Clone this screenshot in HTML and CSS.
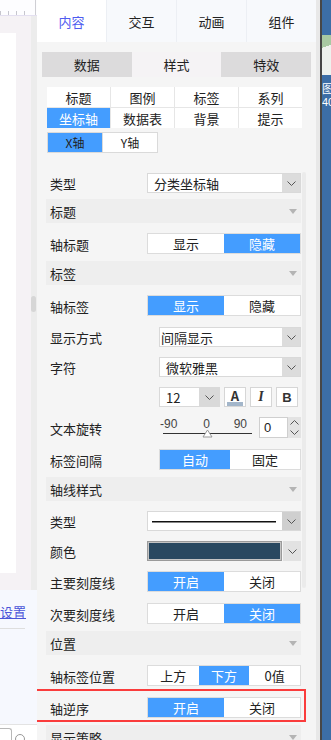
FILE: index.html
```html
<!DOCTYPE html>
<html lang="zh-CN">
<head>
  <meta charset="UTF-8">
  <meta name="viewport" content="width=device-width, initial-scale=1.0">
  <title>坐标轴样式</title>
  <link rel="stylesheet" href="styles.css">
</head>
<body>
  <div class="app">
    <div class="canvas">
      <div class="ruler">
        <span class="tick"></span><span class="tick"></span><span class="tick"></span><span class="tick"></span>
        <span class="ruler-end"></span>
      </div>
      <div class="board">
        <div class="stage"><div class="sheet"></div></div>
        <div class="gutter"><div class="gutter-thumb"></div></div>
      </div>
      <div class="props">
        <a class="link">设置</a>
        <div class="rule"></div>
        <div class="foot">
          <span class="foot-box"></span>
          <span class="foot-circle"></span>
        </div>
      </div>
    </div>

    <div class="panel">
      <div class="tabs">
        <div class="tab on">内容</div>
        <div class="tab">交互</div>
        <div class="tab">动画</div>
        <div class="tab">组件</div>
      </div>

      <div class="subtabs">
        <div class="subtab">数据</div>
        <div class="subtab on">样式</div>
        <div class="subtab">特效</div>
      </div>

      <div class="cats">
        <div class="cat">标题</div>
        <div class="cat">图例</div>
        <div class="cat">标签</div>
        <div class="cat">系列</div>
        <div class="cat on">坐标轴</div>
        <div class="cat">数据表</div>
        <div class="cat">背景</div>
        <div class="cat">提示</div>
      </div>

      <div class="axes">
        <div class="axis on">X轴</div>
        <div class="axis">Y轴</div>
      </div>

      <div class="scroll">
        <div class="form">
          <div class="row">
            <div class="label">类型</div>
            <div class="select">
              <span class="select-text">分类坐标轴</span>
              <span class="select-arrow"><svg width="9" height="5" viewBox="0 0 9 5"><path d="M.5.5 4.5 4.5 8.5.5" fill="none" stroke="#555"/></svg></span>
            </div>
          </div>

          <div class="head">标题<span class="caret"></span></div>
          <div class="row">
            <div class="label">轴标题</div>
            <div class="toggle">
              <span class="opt">显示</span>
              <span class="opt on">隐藏</span>
            </div>
          </div>

          <div class="head">标签<span class="caret"></span></div>
          <div class="row">
            <div class="label">轴标签</div>
            <div class="toggle">
              <span class="opt on">显示</span>
              <span class="opt">隐藏</span>
            </div>
          </div>
          <div class="row">
            <div class="label wide">显示方式</div>
            <div class="select">
              <span class="select-text tight">间隔显示</span>
              <span class="select-arrow"><svg width="9" height="5" viewBox="0 0 9 5"><path d="M.5.5 4.5 4.5 8.5.5" fill="none" stroke="#555"/></svg></span>
            </div>
          </div>
          <div class="row">
            <div class="label wide">字符</div>
            <div class="select">
              <span class="select-text">微软雅黑</span>
              <span class="select-arrow"><svg width="9" height="5" viewBox="0 0 9 5"><path d="M.5.5 4.5 4.5 8.5.5" fill="none" stroke="#555"/></svg></span>
            </div>
          </div>
          <div class="row">
            <div class="label wide"></div>
            <div class="select size">
              <span class="select-text">12</span>
              <span class="select-arrow"><svg width="9" height="5" viewBox="0 0 9 5"><path d="M.5.5 4.5 4.5 8.5.5" fill="none" stroke="#555"/></svg></span>
            </div>
            <div class="fmt fmt-a">A<i></i></div>
            <div class="fmt fmt-i">I</div>
            <div class="fmt fmt-b">B</div>
          </div>
          <div class="row">
            <div class="label wide">文本旋转</div>
            <div class="slider">
              <div class="slider-marks"><span>-90</span><span class="mid">0</span><span class="end">90</span></div>
              <div class="slider-track">
                <svg class="slider-knob" width="11" height="9" viewBox="0 0 11 9"><path d="M5.5 1 10 8H1Z" fill="#fff" stroke="#999"/></svg>
              </div>
            </div>
            <div class="num">0</div>
            <div class="spin">
              <svg width="9" height="5" viewBox="0 0 9 5"><path d="M.5 4.5 4.5.5 8.5 4.5" fill="none" stroke="#555"/></svg>
              <svg width="9" height="5" viewBox="0 0 9 5"><path d="M.5.5 4.5 4.5 8.5.5" fill="none" stroke="#555"/></svg>
            </div>
          </div>
          <div class="row">
            <div class="label wide">标签间隔</div>
            <div class="toggle">
              <span class="opt on">自动</span>
              <span class="opt">固定</span>
            </div>
          </div>

          <div class="head">轴线样式<span class="caret"></span></div>
          <div class="row">
            <div class="label">类型</div>
            <div class="select">
              <span class="select-text"><span class="stroke"></span></span>
              <span class="select-arrow dark"><svg width="9" height="5" viewBox="0 0 9 5"><path d="M.5.5 4.5 4.5 8.5.5" fill="none" stroke="#555"/></svg></span>
            </div>
          </div>
          <div class="row">
            <div class="label">颜色</div>
            <div class="color">
              <span class="swatch"></span>
              <span class="select-arrow"><svg width="9" height="5" viewBox="0 0 9 5"><path d="M.5.5 4.5 4.5 8.5.5" fill="none" stroke="#555"/></svg></span>
            </div>
          </div>
          <div class="row">
            <div class="label">主要刻度线</div>
            <div class="toggle">
              <span class="opt on">开启</span>
              <span class="opt">关闭</span>
            </div>
          </div>
          <div class="row">
            <div class="label">次要刻度线</div>
            <div class="toggle">
              <span class="opt">开启</span>
              <span class="opt on">关闭</span>
            </div>
          </div>

          <div class="head">位置<span class="caret"></span></div>
          <div class="row">
            <div class="label">轴标签位置</div>
            <div class="toggle">
              <span class="opt">上方</span>
              <span class="opt on">下方</span>
              <span class="opt">0值</span>
            </div>
          </div>
          <div class="row marked">
            <div class="label">轴逆序</div>
            <div class="toggle">
              <span class="opt on">开启</span>
              <span class="opt">关闭</span>
            </div>
            <span class="mark"></span>
          </div>

          <div class="head">显示策略<span class="caret"></span></div>
        </div>
        <div class="bar"></div>
      </div>
    </div>

    <div class="edge"></div>
    <div class="divider"></div>
    <div class="dock">
      <div class="dock-thumb"></div>
      <div class="dock-name">图</div>
      <div class="dock-count">40</div>
    </div>
  </div>
</body>
</html>
```

FILE: styles.css
```css
* {
  margin: 0;
  padding: 0;
  box-sizing: border-box;
}

body {
  width: 331px;
  height: 740px;
  overflow: hidden;
  font-family: "Noto Sans CJK SC", sans-serif;
  font-size: 13px;
  color: #222;
}

.app {
  display: flex;
  height: 740px;
}

/* left canvas strip */
.canvas {
  width: 37px;
  display: flex;
  flex-direction: column;
}

.ruler {
  height: 16px;
  background: #fdfdff;
  border-bottom: 1px solid #e3dff0;
  display: flex;
  align-items: flex-end;
  gap: 7px;
}

.tick {
  width: 1px;
  height: 4px;
  background: #c6c6ce;
}

.ruler-end {
  align-self: stretch;
  width: 1px;
  margin-left: auto;
  margin-right: 1px;
  background: #cfcfd4;
}

.board {
  height: 574px;
  display: flex;
}

.stage {
  width: 31px;
  background: #f5f2f5;
  padding: 17px 15px 17px 0;
}

.sheet {
  height: 100%;
  background: #fff;
}

.gutter {
  width: 6px;
  background: #ececec;
  padding-top: 280px;
}

.gutter-thumb {
  width: 5px;
  height: 16px;
  background: #d6d6d6;
  border-radius: 3px;
}

.props {
  flex: 1;
  background: #f6f8fe;
  display: flex;
  flex-direction: column;
}

.link {
  margin-top: 14px;
  line-height: 16px;
  color: #4b55d9;
  text-decoration: underline;
}

.rule {
  width: 25px;
  height: 1px;
  margin-top: 8px;
  background: #dedede;
}

.foot {
  margin-top: auto;
  height: 16px;
  background: #fff;
  border-top: 1px solid #e3e3e3;
  display: flex;
  align-items: flex-end;
  gap: 3px;
}

.foot-box {
  width: 12px;
  height: 12px;
  border: 1px solid #b8b8b8;
  border-bottom: none;
  border-left: none;
  border-radius: 0 3px 0 0;
}

.foot-circle {
  width: 10px;
  height: 10px;
  margin-bottom: -4px;
  border: 1px solid #999;
  border-radius: 50%;
}

/* settings panel */
.panel {
  width: 279px;
  background: #f5f5f5;
  display: flex;
  flex-direction: column;
  overflow: hidden;
}

.tabs {
  display: flex;
  height: 42px;
  flex: none;
}

.tab {
  flex: 1;
  display: flex;
  align-items: center;
  justify-content: center;
  background: #f7f9fc;
  border-left: 1px solid #eceff4;
  font-size: 13px;
}

.tab.on {
  background: #fff;
  color: #4f5cf0;
  border-left: none;
}

.subtabs {
  display: flex;
  height: 25px;
  margin: 10px 5px 0;
  flex: none;
}

.subtab {
  flex: 1;
  display: flex;
  align-items: center;
  justify-content: center;
  background: #dcdbdc;
}

.subtab.on {
  background: #f5f3f5;
}

.cats {
  display: grid;
  grid-template-columns: repeat(4, 1fr);
  grid-auto-rows: 20px;
  gap: 1px;
  margin: 10px 14px 0 10px;
  background: #e6e6e6;
  flex: none;
}

.cat {
  display: flex;
  align-items: center;
  justify-content: center;
  background: #fff;
}

.cat.on {
  background: #449dff;
  color: #fff;
}

.axes {
  display: flex;
  margin: 4px 0 0 10px;
  flex: none;
}

.axis {
  width: 56px;
  height: 21px;
  display: flex;
  align-items: center;
  justify-content: center;
  background: #fff;
  border: 1px solid #dadada;
  font-size: 12px;
}

.axis + .axis {
  width: 55px;
  border-left: none;
}

.axis.on {
  background: #449dff;
}

.scroll {
  display: flex;
  flex: 1;
}

.form {
  flex: 1;
  margin-left: 9px;
  padding-top: 10px;
}

.bar {
  width: 4px;
  height: 416px;
  margin: 19px 10px 0 1px;
  background: #ebebeb;
  border-radius: 2px;
}

.row {
  display: flex;
  align-items: center;
  margin-top: 10px;
}

.label {
  width: 101px;
  padding-left: 4px;
  flex: none;
}

.label.wide {
  width: 113px;
}

.head {
  margin-top: 6px;
  height: 24px;
  padding: 0 4px;
  background: #eeeeee;
  display: flex;
  align-items: center;
  justify-content: space-between;
}

.caret {
  width: 0;
  height: 0;
  border-left: 4px solid transparent;
  border-right: 4px solid transparent;
  border-top: 5px solid #b4b4b4;
}

.select {
  flex: 1;
  height: 20px;
  display: flex;
  background: #fff;
  border: 1px solid #d9d9d9;
}

.select-text {
  flex: 1;
  display: flex;
  align-items: center;
  padding-left: 6px;
}

.select-text.tight {
  padding-left: 1px;
}

.select-arrow {
  width: 18px;
  display: flex;
  align-items: center;
  justify-content: center;
  background: #dcdcdc;
}

.select-arrow.dark {
  background: #cfcfcf;
}

.select.size {
  flex: none;
  width: 61px;
}

.select.size .select-arrow {
  width: 20px;
  background: #d9d9d9;
}

.stroke {
  width: 124px;
  height: 1px;
  margin-left: -2px;
  background: #111;
  box-shadow: 0 0.5px 0 #111;
}

.fmt {
  width: 22px;
  height: 20px;
  margin-left: 4px;
  display: flex;
  align-items: center;
  justify-content: center;
  background: #fff;
  border: 1px solid #d6d6d6;
  color: #333;
}

.fmt-a {
  flex-direction: column;
  font-weight: bold;
  line-height: 12px;
  padding-top: 2px;
}

.fmt-a i {
  width: 16px;
  height: 4px;
  margin-top: 0;
  background: #a3b6ca;
}

.fmt-i {
  font-family: "Liberation Serif", serif;
  font-style: italic;
  font-weight: bold;
  font-size: 14px;
}

.fmt-b {
  font-family: "Liberation Sans", sans-serif;
  font-weight: bold;
  font-size: 13px;
}

.slider {
  width: 93px;
  margin-top: -4px;
  margin-right: 7px;
  flex: none;
}

.slider-marks {
  display: grid;
  grid-template-columns: 1fr auto 1fr;
  padding: 0 5px 0 1px;
  font-family: "Liberation Sans", sans-serif;
  font-size: 12px;
  line-height: 13px;
  color: #444;
}

.slider-marks .mid {
  position: relative;
  left: 3px;
}

.slider-marks .end {
  text-align: right;
}

.slider-track {
  position: relative;
  height: 1px;
  margin: 2px 0 0 4px;
  background: #333;
}

.slider-knob {
  position: absolute;
  left: 39px;
  top: -4px;
}

.num {
  width: 29px;
  height: 21px;
  margin-bottom: 1px;
  padding-left: 4px;
  display: flex;
  align-items: center;
  background: #fff;
  border: 1px solid #cfcfcf;
  font-family: "Liberation Sans", sans-serif;
}

.spin {
  width: 13px;
  height: 21px;
  margin-bottom: 1px;
  display: flex;
  flex-direction: column;
  align-items: center;
  justify-content: space-around;
  background: #e3e3e3;
}

.toggle {
  flex: 1;
  height: 21px;
  margin-bottom: 1px;
  display: flex;
  background: #fff;
  border: 1px solid #dcdcdc;
}

.opt {
  flex: 1;
  display: flex;
  align-items: center;
  justify-content: center;
}

.opt.on {
  background: #449dff;
  color: #fff;
}

.color {
  flex: 1;
  height: 20px;
  display: flex;
  gap: 1px;
}

.swatch {
  flex: 1;
  background: #294860;
  border: 1px solid #9a9a9a;
  box-shadow: inset 0 0 0 1px #c4c4c4;
}

.color .select-arrow {
  background: #e2e2e2;
}

.row.marked {
  position: relative;
}

.mark {
  position: absolute;
  left: -11px;
  top: -8px;
  right: -5px;
  bottom: -3px;
  border: 2px solid #fa3c3c;
}

/* right edge */
.edge {
  width: 4px;
  background: #e8e8e8;
}

.divider {
  width: 2px;
  background: #474747;
}

.dock {
  width: 9px;
  background: #3c6ea6;
  padding-top: 35px;
  color: #fff;
  overflow: hidden;
}

.dock-thumb {
  height: 40px;
  margin-bottom: 5px;
  background: linear-gradient(160deg, #a8c9a2 0 30%, #eef2ee 30%);
}

.dock-name {
  font-size: 11px;
  line-height: 16px;
  height: 16px;
  white-space: nowrap;
}

.dock-count {
  font-family: "Liberation Sans", sans-serif;
  font-size: 11px;
  line-height: 12px;
  height: 12px;
  white-space: nowrap;
}
```
